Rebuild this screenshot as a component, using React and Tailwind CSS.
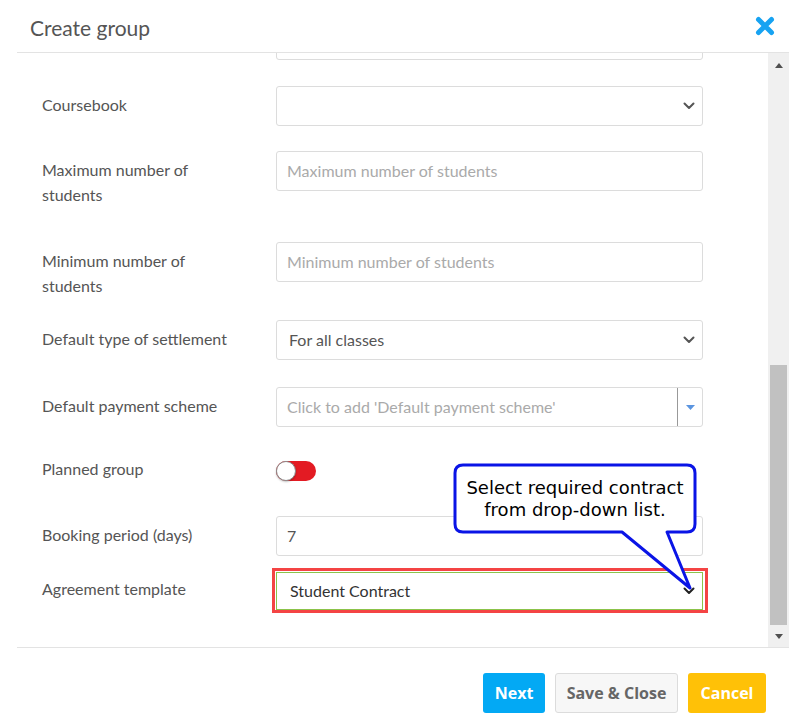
import React from "react";

const Chevron = ({ color = "#555" }) => (
  <svg width="12" height="8" viewBox="0 0 12 8" className="shrink-0">
    <path d="M1.5 1.5 L6 6 L10.5 1.5" fill="none" stroke={color} strokeWidth="2" strokeLinecap="round" strokeLinejoin="round" />
  </svg>
);

const Label = ({ children }) => (
  <div className="w-[234px] shrink-0 pt-[6px] pb-2 pr-[39px] text-[16px] leading-[25px] text-[#555]">{children}</div>
);

const Box = ({ children, className = "" }) => (
  <div className={"w-[427px] h-10 shrink-0 border border-[#dcdcdc] rounded-[3px] bg-white flex items-center text-[16px] " + className}>
    {children}
  </div>
);

export default function App() {
  return (
    <div className="relative w-[804px] h-[728px] bg-white overflow-hidden" style={{ fontFamily: "Lato, 'Open Sans', sans-serif" }}>
      <div className="ml-[17px] w-[772px]">
        {/* Header */}
        <div className="h-[53px] flex items-center justify-between pl-[13px] pr-[14px] border-b border-[#e3e3e3]">
          <div className="text-[21px] text-[#555] leading-none mt-[2px]">Create group</div>
          <svg width="20" height="20" viewBox="0 0 20 20">
            <path d="M3.5 3.5 L16.5 16.5 M16.5 3.5 L3.5 16.5" stroke="#17a3f2" strokeWidth="5" strokeLinecap="round" />
          </svg>
        </div>

        {/* Body */}
        <div className="h-[595px] flex border-b border-[#e3e3e3]">
          <div className="flex-1 overflow-hidden pl-[25px]">
            <div className="flex -mt-[33px] h-[66px]">
              <div className="w-[234px] shrink-0" />
              <Box />
            </div>
            {/* Coursebook */}
            <div className="flex h-[65px]">
              <Label>Coursebook</Label>
              <Box className="justify-end pr-[7px]"><Chevron /></Box>
            </div>
            {/* Max */}
            <div className="flex h-[91px]">
              <Label>Maximum number of students</Label>
              <Box className="px-[10px] text-[#aaa]">Maximum number of students</Box>
            </div>
            {/* Min */}
            <div className="flex h-[78px]">
              <Label>Minimum number of students</Label>
              <Box className="px-[10px] text-[#aaa]">Minimum number of students</Box>
            </div>
            {/* Settlement */}
            <div className="flex h-[67px]">
              <Label>Default type of settlement</Label>
              <Box className="justify-between pl-[12px] pr-[7px] text-[#555]">
                <span>For all classes</span>
                <Chevron />
              </Box>
            </div>
            {/* Payment */}
            <div className="flex h-[63px]">
              <Label>Default payment scheme</Label>
              <Box className="pl-[10px] text-[#aaa]">
                <span className="flex-1">Click to add 'Default payment scheme'</span>
                <div className="w-px h-full bg-[#999]" />
                <div className="w-[24px] h-full flex items-center justify-center">
                  <svg width="9" height="5" viewBox="0 0 9 5"><path d="M0 0 H9 L4.5 5 Z" fill="#5b95e0" /></svg>
                </div>
              </Box>
            </div>
            {/* Planned */}
            <div className="flex h-[66px]">
              <Label>Planned group</Label>
              <div className="mt-[11px] relative w-[40px] h-[20px] rounded-full bg-[#e31b23]">
                <div className="absolute left-0 top-0 w-[20px] h-[20px] rounded-full bg-white border border-[#8a8a8a] shadow-[0_1px_2px_rgba(0,0,0,0.25)]" />
              </div>
            </div>
            {/* Booking */}
            <div className="flex h-[54px]">
              <Label>Booking period (days)</Label>
              <Box className="px-[10px] text-[#555]">7</Box>
            </div>
            {/* Agreement */}
            <div className="flex items-start h-[60px]">
              <Label>Agreement template</Label>
              <div className="relative mt-[2px] h-[38px]">
                <div className="w-[427px] h-[38px] border border-[#8bc34a] bg-white flex items-center justify-between pl-[13px] pr-[7px] text-[16px] text-[#333]">
                  <span>Student Contract</span>
                  <Chevron color="#222" />
                </div>
                <div className="absolute -left-[4px] -right-[5px] -top-[4px] -bottom-[3px] border-[3px] border-[#f44444]" />
              </div>
            </div>
          </div>

          {/* Scrollbar */}
          <div className="w-[21px] shrink-0 bg-[#f0f0f0] flex flex-col">
            <div className="h-[24px] flex items-center justify-center">
              <svg width="8" height="5" viewBox="0 0 8 5"><path d="M0 5 H8 L4 0 Z" fill="#505050" /></svg>
            </div>
            <div className="h-[288px]" />
            <div className="mx-[2px] h-[260px] bg-[#c1c1c1]" />
            <div className="flex-1 flex items-center justify-center">
              <svg width="8" height="5" viewBox="0 0 8 5"><path d="M0 0 H8 L4 5 Z" fill="#505050" /></svg>
            </div>
          </div>
        </div>

        {/* Footer */}
        <div className="flex justify-end gap-[10px] pt-[25px] pr-[23px]" style={{ fontFamily: "'Open Sans', Lato, sans-serif" }}>
          <button className="h-[40px] w-[62px] rounded-[3px] bg-[#03a9f4] text-white font-bold text-[16px]">Next</button>
          <button className="h-[40px] w-[123px] rounded-[3px] bg-[#f7f7f7] border border-[#dcdcdc] text-[#666] font-bold text-[16px]">Save &amp; Close</button>
          <button className="h-[40px] w-[78px] rounded-[3px] bg-[#ffc107] text-white font-bold text-[16px]">Cancel</button>
        </div>
      </div>

      {/* Callout annotation */}
      <svg className="absolute left-[440px] top-[455px]" width="270" height="150" viewBox="0 0 270 150">
        <path d="M23 10 H247 Q255 10 255 18 V69 Q255 77 247 77 H227 L250 133 L182 77 H23 Q15 77 15 69 V18 Q15 10 23 10 Z" fill="white" stroke="#0a14e6" strokeWidth="3" strokeLinejoin="round" />
      </svg>
      <div className="absolute left-[455px] top-[465px] w-[240px] h-[67px] flex flex-col items-center justify-center text-[18px] leading-[22px] text-black" style={{ fontFamily: "'DejaVu Sans', Verdana, sans-serif" }}>
        <span>Select required contract</span>
        <span>from drop-down list.</span>
      </div>
    </div>
  );
}
